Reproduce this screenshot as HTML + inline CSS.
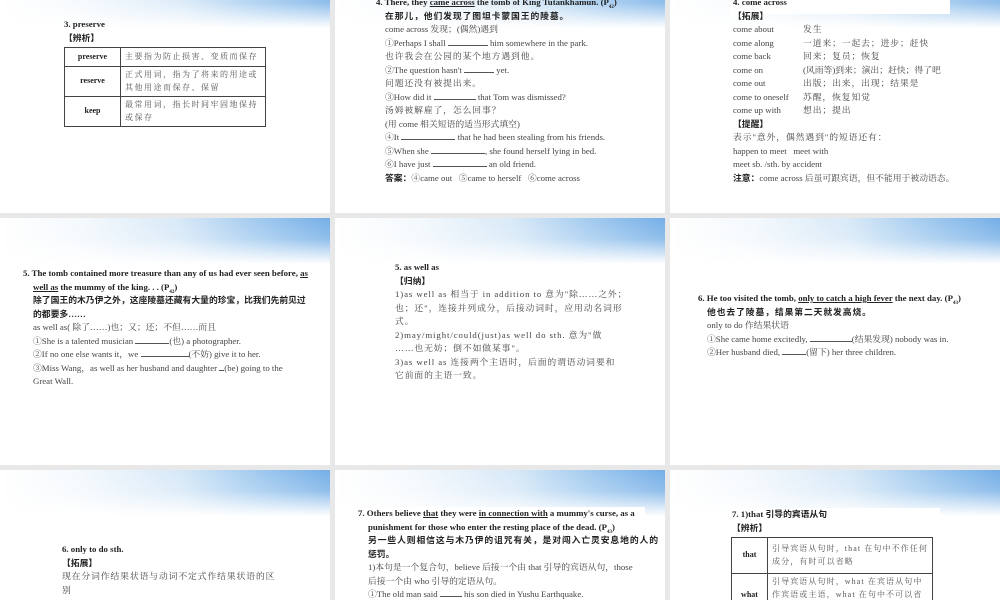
<!DOCTYPE html>
<html><head><meta charset="utf-8"><style>
*{margin:0;padding:0;box-sizing:border-box}
body{width:1000px;height:600px;background:#e8e8e8;position:relative;overflow:hidden;font-family:"Liberation Serif","Noto Serif CJK SC",serif;color:#333}
.s{position:absolute;background:#fff;overflow:hidden}
.h{position:absolute;left:0;right:0;height:46px;background:linear-gradient(90deg,#fff 0%,#f4f9fd 25%,#d6e8f7 55%,#9cc7ee 80%,#74aee6 100%)}
.h::after{content:"";position:absolute;inset:0;background:linear-gradient(180deg,rgba(255,255,255,0) 0%,rgba(255,255,255,0.2) 45%,#fff 100%)}
.t{position:absolute;font-size:8.8px;line-height:13.5px;white-space:nowrap;color:#444}
.t div{height:13.5px}
.c{letter-spacing:0.9px}
.e{letter-spacing:0.3px}
b{color:#222;font-family:"Liberation Serif","Noto Sans CJK SC",serif}
u{text-decoration:underline}
.bl{display:inline-block;border-bottom:0.8px solid #555;height:9px;vertical-align:baseline}
table{position:absolute;border-collapse:collapse;font-size:8px;color:#555}
td{border:1px solid #444;padding:2px 4px;line-height:12.5px;letter-spacing:1.5px}
td.k{font-weight:bold;text-align:center;color:#222;letter-spacing:0}
.t9 td{letter-spacing:1.1px}
.t9 td.k{letter-spacing:0}
</style></head><body>

<!-- slide 1 -->
<div class="s" style="left:0;top:0;width:330px;height:213px">
<div class="h" style="top:-18px"></div>
<div class="t" style="left:64px;top:18px"><div><b>3. preserve</b></div><div><b>【辨析】</b></div></div>
<table style="left:64px;top:47px;width:202px">
<tr style="height:19px"><td class="k" style="width:56px">preserve</td><td>主要指为防止损害、变质而保存</td></tr>
<tr style="height:27px"><td class="k">reserve</td><td>正式用词，指为了将来的用途或其他用途而保存、保留</td></tr>
<tr style="height:27px"><td class="k">keep</td><td>最常用词，指长时间牢固地保持或保存</td></tr>
</table>
</div>

<!-- slide 2 -->
<div class="s" style="left:335px;top:0;width:330px;height:213px">
<div class="h" style="top:-18px"></div>
<div class="t" style="left:41px;top:-4px">
<div><b>4. There, they <u>came across</u> the tomb of King Tutankhamun. (P<sub style="font-size:5px">42</sub>)</b></div>
<div style="padding-left:9px" class="c"><b>在那儿，他们发现了图坦卡蒙国王的陵墓。</b></div>
<div style="padding-left:9px">come across 发现；(偶然)遇到</div>
<div style="padding-left:9px">①Perhaps I shall <span class="bl" style="width:40px"></span> him somewhere in the park.</div>
<div style="padding-left:9px" class="c">也许我会在公园的某个地方遇到他。</div>
<div style="padding-left:9px">②The question hasn't <span class="bl" style="width:30px"></span> yet.</div>
<div style="padding-left:9px" class="c">问题还没有被提出来。</div>
<div style="padding-left:9px">③How did it <span class="bl" style="width:42px"></span> that Tom was dismissed?</div>
<div style="padding-left:9px" class="c">汤姆被解雇了，怎么回事？</div>
<div style="padding-left:9px">(用 come 相关短语的适当形式填空)</div>
<div style="padding-left:9px">④It <span class="bl" style="width:54px"></span> that he had been stealing from his friends.</div>
<div style="padding-left:9px">⑤When she <span class="bl" style="width:54px"></span>, she found herself lying in bed.</div>
<div style="padding-left:9px">⑥I have just <span class="bl" style="width:54px"></span> an old friend.</div>
<div style="padding-left:9px"><b>答案：</b>④came out &nbsp;&nbsp;⑤came to herself &nbsp;&nbsp;⑥come across</div>
</div>
</div>

<!-- slide 3 -->
<div class="s" style="left:670px;top:0;width:330px;height:213px">
<div class="h" style="top:-18px"></div>
<div style="position:absolute;left:60px;top:0;width:220px;height:14px;background:#fff"></div>
<div class="t" style="left:63px;top:-4px">
<div><b>4. come across</b></div>
<div><b>【拓展】</b></div>
<div>come about<span style="position:absolute;left:70px" class="c">发生</span></div>
<div>come along<span style="position:absolute;left:70px" class="c">一道来；一起去；进步；赶快</span></div>
<div>come back<span style="position:absolute;left:70px" class="c">回来；复员；恢复</span></div>
<div>come on<span style="position:absolute;left:70px">(风雨等)到来；演出；赶快；得了吧</span></div>
<div>come out<span style="position:absolute;left:70px" class="c">出版；出来，出现；结果是</span></div>
<div>come to oneself<span style="position:absolute;left:70px" class="c">苏醒，恢复知觉</span></div>
<div>come up with<span style="position:absolute;left:70px" class="c">想出；提出</span></div>
<div><b>【提醒】</b></div>
<div class="c">表示"意外，偶然遇到"的短语还有：</div>
<div>happen to meet &nbsp;&nbsp;meet with</div>
<div>meet sb. /sth. by accident</div>
<div><b>注意：</b>come across 后虽可跟宾语，但不能用于被动语态。</div>
</div>
</div>

<!-- slide 4 -->
<div class="s" style="left:0;top:218px;width:330px;height:247px">
<div class="h" style="top:0"></div>
<div class="t" style="left:23px;top:49px">
<div><b>5. The tomb contained more treasure than any of us had ever seen before, <u>as</u></b></div>
<div style="padding-left:10px"><b><u>well as</u> the mummy of the king. . . (P<sub style="font-size:5px">42</sub>)</b></div>
<div style="padding-left:10px"><b>除了国王的木乃伊之外，这座陵墓还藏有大量的珍宝，比我们先前见过</b></div>
<div style="padding-left:10px"><b>的都要多……</b></div>
<div style="padding-left:10px">as well as( 除了……)也；又；还；不但……而且</div>
<div style="padding-left:10px">①She is a talented musician <span class="bl" style="width:34px"></span>(也) a photographer.</div>
<div style="padding-left:10px">②If no one else wants it，we <span class="bl" style="width:48px"></span>(不妨) give it to her.</div>
<div style="padding-left:10px">③Miss Wang，as well as her husband and daughter <span class="bl" style="width:5px"></span>(be) going to the</div>
<div style="padding-left:10px">Great Wall.</div>
</div>
</div>

<!-- slide 5 -->
<div class="s" style="left:335px;top:218px;width:330px;height:247px">
<div class="h" style="top:0"></div>
<div class="t" style="left:60px;top:43px">
<div><b>5. as well as</b></div>
<div><b>【归纳】</b></div>
<div class="c">1)as well as 相当于 in addition to 意为"除……之外；</div>
<div class="c">也；还"，连接并列成分，后接动词时，应用动名词形</div>
<div class="c">式。</div>
<div class="c">2)may/might/could(just)as well do sth. 意为"做</div>
<div class="c">……也无妨；倒不如做某事"。</div>
<div class="c">3)as well as 连接两个主语时，后面的谓语动词要和</div>
<div class="c">它前面的主语一致。</div>
</div>
</div>

<!-- slide 6 -->
<div class="s" style="left:670px;top:218px;width:330px;height:247px">
<div class="h" style="top:0"></div>
<div class="t" style="left:28px;top:74px">
<div><b>6. He too visited the tomb, <u>only to catch a high fever</u> the next day. (P<sub style="font-size:5px">43</sub>)</b></div>
<div style="padding-left:9px" class="c"><b>他也去了陵墓，结果第二天就发高烧。</b></div>
<div style="padding-left:9px">only to do 作结果状语</div>
<div style="padding-left:9px">①She came home excitedly, <span class="bl" style="width:42px"></span>(结果发现) nobody was in.</div>
<div style="padding-left:9px">②Her husband died, <span class="bl" style="width:24px"></span>(留下) her three children.</div>
</div>
</div>

<!-- slide 7 -->
<div class="s" style="left:0;top:470px;width:330px;height:130px">
<div class="h" style="top:0"></div>
<div class="t" style="left:62px;top:73px">
<div><b>6. only to do sth.</b></div>
<div><b>【拓展】</b></div>
<div class="c">现在分词作结果状语与动词不定式作结果状语的区</div>
<div>别</div>
</div>
</div>

<!-- slide 8 -->
<div class="s" style="left:335px;top:470px;width:330px;height:130px">
<div class="h" style="top:0"></div>
<div style="position:absolute;left:20px;top:37px;width:290px;height:14px;background:#fff"></div>
<div class="t" style="left:23px;top:37px">
<div><b>7. Others believe <u>that</u> they were <u>in connection with</u> a mummy's curse, as a</b></div>
<div style="padding-left:10px"><b>punishment for those who enter the resting place of the dead. (P<sub style="font-size:5px">43</sub>)</b></div>
<div style="padding-left:10px" class="c"><b>另一些人则相信这与木乃伊的诅咒有关，是对闯入亡灵安息地的人的</b></div>
<div style="padding-left:10px"><b>惩罚。</b></div>
<div style="padding-left:10px">1)本句是一个复合句，believe 后接一个由 that 引导的宾语从句，those</div>
<div style="padding-left:10px">后接一个由 who 引导的定语从句。</div>
<div style="padding-left:10px">①The old man said <span class="bl" style="width:22px"></span> his son died in Yushu Earthquake.</div>
</div>
</div>

<!-- slide 9 -->
<div class="s" style="left:670px;top:470px;width:330px;height:130px">
<div class="h" style="top:0"></div>
<div style="position:absolute;left:60px;top:38px;width:210px;height:14px;background:#fff"></div>
<div class="t" style="left:62px;top:38px">
<div><b>7. 1)that 引导的宾语从句</b></div>
<div><b>【辨析】</b></div>
</div>
<table class="t9" style="left:61px;top:67px;width:202px">
<tr style="height:36px"><td class="k" style="width:36px">that</td><td>引导宾语从句时，that 在句中不作任何成分，有时可以省略</td></tr>
<tr style="height:36px"><td class="k">what</td><td>引导宾语从句时，what 在宾语从句中作宾语或主语，what 在句中不可以省略</td></tr>
</table>
</div>

</body></html>
